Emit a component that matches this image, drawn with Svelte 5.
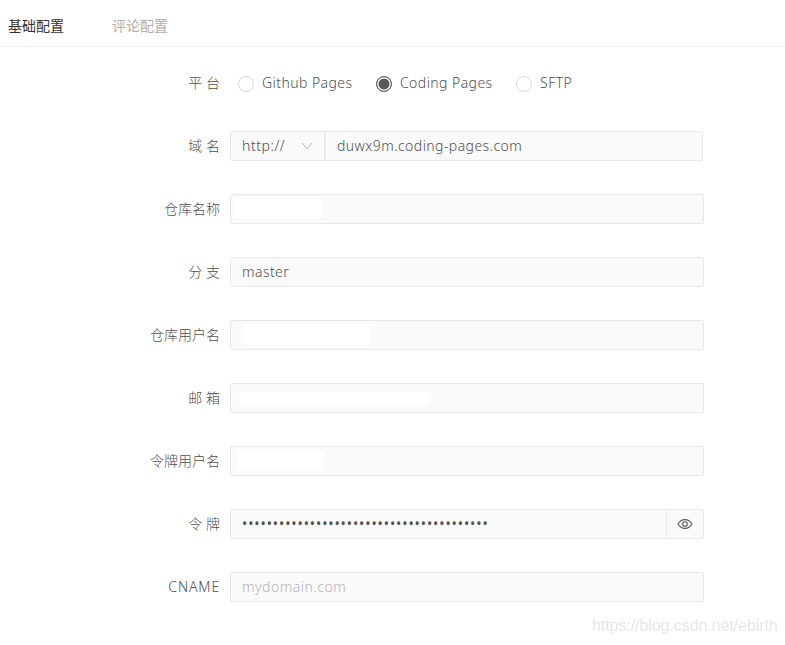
<script>
  const platforms = [
    { name: 'Github Pages', checked: false },
    { name: 'Coding Pages', checked: true },
    { name: 'SFTP', checked: false }
  ]

  // mask = the white blocks covering private values in the screenshot
  const rows = [
    { label: '仓库名称', value: '', mask: { left: 3, top: 4, width: 88, height: 19 } },
    { label: '分 支', value: 'master' },
    { label: '仓库用户名', value: '', mask: { left: 12, top: 3, width: 127, height: 21 } },
    { label: '邮 箱', value: '', mask: { left: 8, top: 8, width: 190, height: 13 } },
    { label: '令牌用户名', value: '', mask: { left: 6, top: 4, width: 87, height: 19 } }
  ]
</script>

<div class="page">
  <div class="tabs">
    <div class="tab active">基础配置</div>
    <div class="tab">评论配置</div>
  </div>

  <form class="form">
    <div class="row">
      <div class="label">平 台</div>
      <div class="radios">
        {#each platforms as p}
          <label class="radio">
            <span class="dot" class:checked={p.checked}></span>
            <span>{p.name}</span>
          </label>
        {/each}
      </div>
    </div>

    <div class="row">
      <div class="label">域 名</div>
      <div class="field url">
        <div class="select">
          <span>http://</span>
          <svg width="12" height="12" viewBox="0 0 12 12"><path d="M1 3 6 8.500 11 3" fill="none" stroke="#b5b5b5" stroke-width="1"/></svg>
        </div>
        <input class="input" value="duwx9m.coding-pages.com" readonly />
      </div>
    </div>

    {#each rows as row}
      <div class="row">
        <div class="label">{row.label}</div>
        <div class="field">
          <input class="input" value={row.value} readonly />
          {#if row.mask}
            <div class="mask" style="left:{row.mask.left}px;top:{row.mask.top}px;width:{row.mask.width}px;height:{row.mask.height}px"></div>
          {/if}
        </div>
      </div>
    {/each}

    <div class="row">
      <div class="label">令 牌</div>
      <div class="field">
        <input class="input secret" type="password" value="0123456789012345678901234567890123456789" readonly />
        <div class="eye">
          <svg width="16" height="16" viewBox="0 0 16 16" fill="none" stroke="#595959" stroke-width="1.100">
            <path d="M1 8C2.600 5.200 5 3.600 8 3.600s5.400 1.600 7 4.400c-1.600 2.800-4 4.400-7 4.400S2.600 10.800 1 8z"/>
            <circle cx="8" cy="8" r="2.300"/>
          </svg>
        </div>
      </div>
    </div>

    <div class="row">
      <div class="label latin">CNAME</div>
      <div class="field">
        <input class="input placeholder-wide" placeholder="mydomain.com" readonly />
      </div>
    </div>
  </form>

  <div class="watermark">https://blog.csdn.net/ebirth</div>
</div>

<style>
  :global(body) {
    margin: 0;
    background: #fff;
  }

  .page {
    position: relative;
    width: 785px;
    height: 645px;
    overflow: hidden;
    font-family: "Noto Sans", "Noto Sans CJK SC", sans-serif;
    font-size: 14px;
    font-weight: 300;
    letter-spacing: 0.43px;
    color: #505050;
  }

  .tabs {
    display: flex;
    gap: 48px;
    height: 46px;
    padding-left: 8px;
    border-bottom: 1px solid #efefef;
    line-height: 52px;
    letter-spacing: 0;
    font-weight: 400;
    color: #b4aca6;
  }

  .tab.active {
    color: #333;
  }

  .form {
    display: flex;
    flex-direction: column;
    gap: 33px;
    padding-top: 21px;
  }

  .row {
    display: flex;
    align-items: center;
    height: 30px;
    line-height: 28px;
  }

  .label {
    width: 220px;
    box-sizing: border-box;
    text-align: right;
    letter-spacing: 0;
  }

  .label.latin {
    letter-spacing: 0.85px;
  }

  .radios {
    display: flex;
    gap: 23.500px;
    padding-left: 18px;
  }

  .radio {
    display: flex;
    align-items: center;
    gap: 8px;
  }

  .dot {
    width: 14px;
    height: 14px;
    margin-top: 2px;
    border: 1px solid #d9d9d9;
    border-radius: 50%;
    background: #fff;
  }

  .dot.checked {
    border-color: #595959;
    background: #595959;
    box-shadow: inset 0 0 0 1.500px #fff;
  }

  .field {
    position: relative;
    display: flex;
    width: 474px;
    height: 30px;
    margin-left: 10px;
    box-sizing: border-box;
    background: #fafafa;
    border: 1px solid #e8e8e8;
    border-radius: 2px;
  }

  .input {
    flex: 1;
    min-width: 0;
    padding: 0 11px;
    border: 0;
    outline: 0;
    background: transparent;
    font: inherit;
    letter-spacing: inherit;
    color: #505050;
  }

  .input::placeholder {
    color: #b4b4b4;
  }

  .placeholder-wide {
    letter-spacing: 0.5px;
  }

  .url {
    width: 473px;
  }

  .select {
    display: flex;
    align-items: center;
    justify-content: space-between;
    width: 95px;
    box-sizing: border-box;
    padding: 0 11px;
    border-right: 2px solid #ececec;
    letter-spacing: 0.55px;
  }

  .secret {
    font-weight: 400;
    letter-spacing: 0.9px;
  }

  .eye {
    display: flex;
    align-items: center;
    justify-content: center;
    width: 36px;
    border-left: 1px solid #e8e8e8;
  }

  .mask {
    position: absolute;
    background: #fff;
  }

  .watermark {
    position: absolute;
    left: 592px;
    top: 617px;
    font-family: "Liberation Sans", sans-serif;
    font-size: 16px;
    font-weight: 400;
    letter-spacing: -0.07px;
    color: #e6e6e6;
    filter: blur(0.5px);
  }
</style>
